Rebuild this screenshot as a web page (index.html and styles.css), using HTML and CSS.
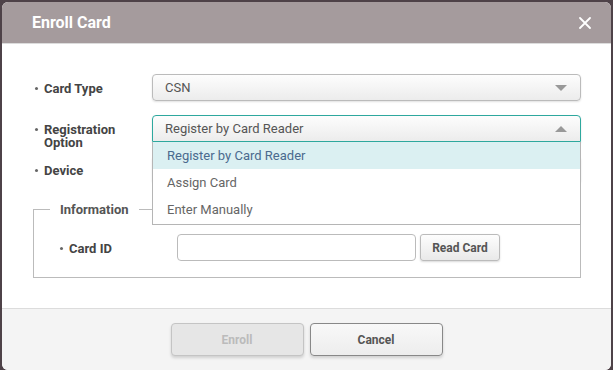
FILE: index.html
```html
<!DOCTYPE html>
<html lang="en">
<head>
    <meta charset="UTF-8">
    <title>Enroll Card</title>
    <link rel="stylesheet" href="styles.css">
</head>
<body>

    <div class="dialog">
        <header class="dialog-header">
            <h1>Enroll Card</h1>
            <button class="close" type="button" aria-label="Close">
                <svg width="12" height="12" viewBox="0 0 12 12">
                    <path d="M1 1 L11 11 M11 1 L1 11" stroke="#fff" stroke-width="1.8" stroke-linecap="round"/>
                </svg>
            </button>
        </header>

        <div class="dialog-body">
            <div class="row">
                <div class="label">Card Type</div>
                <div class="select">
                    <span>CSN</span>
                    <i class="arrow down"></i>
                </div>
            </div>

            <div class="row">
                <div class="label">Registration Option</div>
                <div class="select-wrap">
                    <div class="select open">
                        <span>Register by Card Reader</span>
                        <i class="arrow up"></i>
                    </div>
                    <!-- 열린 드롭다운 목록 -->
                    <ul class="options">
                        <li class="selected">Register by Card Reader</li>
                        <li>Assign Card</li>
                        <li>Enter Manually</li>
                    </ul>
                </div>
            </div>

            <div class="row">
                <div class="label">Device</div>
                <div class="select">
                    <span></span>
                    <i class="arrow down"></i>
                </div>
            </div>

            <fieldset class="info">
                <legend>Information</legend>
                <div class="row">
                    <div class="label">Card ID</div>
                    <input class="text-input" type="text">
                    <button class="btn-small" type="button">Read Card</button>
                </div>
            </fieldset>
        </div>

        <footer class="dialog-footer">
            <button class="btn" type="button" disabled>Enroll</button>
            <button class="btn" type="button">Cancel</button>
        </footer>
    </div>

</body>
</html>
```

FILE: styles.css
```css
html, body {
    height: 100%;
}
body {
    margin: 0;
    padding: 2px 2px 0 2px;
    box-sizing: border-box;
    background-color: #4e4248;
    font-family: Roboto, "Liberation Sans", Arial, sans-serif;
    overflow: hidden;
}

.dialog {
    width: 609px;
    height: 368px;
    background-color: #fff;
    border-radius: 6px;
    overflow: hidden;
    display: flex;
    flex-direction: column;
}

.dialog-header {
    height: 41px;
    background-color: #a59b9d;
    border-bottom: 1px solid #dcdcdc;
    display: flex;
    align-items: center;
    justify-content: space-between;
    padding: 0 19px 0 30px;
}
.dialog-header h1 {
    margin: 0;
    color: #fff;
    font-size: 16px;
    font-weight: 700;
}
.close {
    border: 0;
    background: none;
    padding: 0;
    width: 14px;
    height: 14px;
    display: flex;
    align-items: center;
    justify-content: center;
    cursor: pointer;
}

.dialog-body {
    height: 264px;
    padding: 30px 30px 0 31px;
    box-sizing: border-box;
}

.row {
    display: flex;
    align-items: flex-start;
    height: 27px;
    margin-bottom: 14px;
}
.label {
    flex: none;
    width: 119px;
    padding: 8px 20px 0 11px;
    box-sizing: border-box;
    position: relative;
    font-size: 13px;
    font-weight: 700;
    color: #444;
    line-height: 13px;
}
.label::before {
    content: "";
    position: absolute;
    left: 2px;
    top: 13px;
    width: 3px;
    height: 3px;
    border-radius: 50%;
    background-color: #666;
}

.select-wrap {
    flex: 1;
    position: relative;
}
.select {
    flex: 1;
    height: 27px;
    box-sizing: border-box;
    border: 1px solid #bbb;
    border-radius: 4px;
    background: linear-gradient(#fdfdfd, #ececec);
    box-shadow: 0 1px 2px rgba(0,0,0,0.12);
    display: flex;
    align-items: center;
    justify-content: space-between;
    padding: 0 13px 0 12px;
    font-size: 13px;
    color: #555;
}
.select.open {
    border-color: #2ea89e;
    border-radius: 4px 4px 0 0;
}
.arrow {
    width: 0;
    height: 0;
    border-left: 6px solid transparent;
    border-right: 6px solid transparent;
}
.arrow.down {
    border-top: 6px solid #999;
}
.arrow.up {
    border-bottom: 6px solid #999;
}

.options {
    position: absolute;
    top: 27px;
    left: 0;
    right: 0;
    margin: 0;
    padding: 0 0 1px 0;
    list-style: none;
    background-color: #fff;
    border: 1px solid #b5b5b5;
    border-top: 0;
    z-index: 2;
}
.options li {
    height: 27px;
    line-height: 27px;
    padding-left: 14px;
    font-size: 13px;
    color: #666;
}
.options li.selected {
    background-color: #dbf0f2;
    color: #4a6a8e;
}

.info {
    margin: 19px 0 0 0;
    padding: 17px 0 16px 24px;
    border: 1px solid #bbb;
}
.info legend {
    margin-left: -8px;
    padding: 0 10px;
    font-size: 13px;
    font-weight: 700;
    color: #555;
}
.info .row {
    margin-bottom: 0;
}
.text-input {
    width: 239px;
    height: 27px;
    box-sizing: border-box;
    border: 1px solid #bbb;
    border-radius: 4px;
    margin: 0 4px 0 0;
}
.btn-small {
    width: 80px;
    height: 27px;
    border: 1px solid #bbb;
    border-radius: 3px;
    background: linear-gradient(#fdfdfd, #e9e9e9);
    box-shadow: 0 1px 2px rgba(0,0,0,0.15);
    font-family: inherit;
    font-size: 12px;
    font-weight: 700;
    color: #555;
}

.dialog-footer {
    flex: 1;
    background-color: #f4f4f4;
    border-top: 1px solid #dcdcdc;
    display: flex;
    justify-content: center;
    align-items: flex-start;
    gap: 6px;
    padding-top: 14px;
}
.btn {
    width: 133px;
    height: 33px;
    border: 1px solid #888;
    border-radius: 4px;
    background: linear-gradient(#f8f8f8, #ededed);
    box-shadow: 0 2px 3px rgba(0,0,0,0.15);
    font-family: inherit;
    font-size: 12px;
    font-weight: 700;
    color: #555;
}
.btn:disabled {
    background: #e6e6e6;
    border-color: #c4c4c4;
    color: #bbb;
}
```
